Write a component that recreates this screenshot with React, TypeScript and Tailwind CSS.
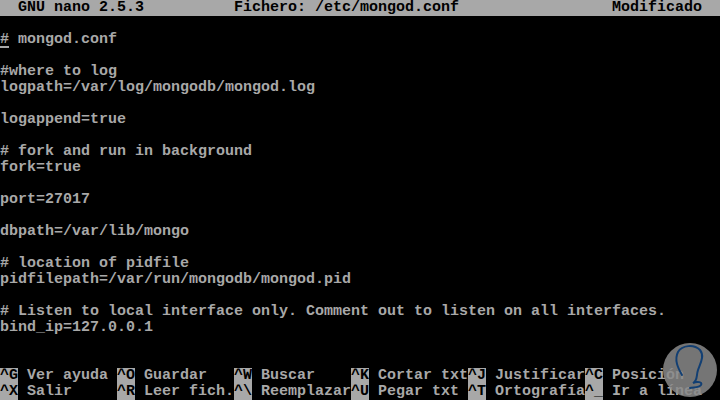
const lines: string[] = [
  "",
  "# mongod.conf",
  "",
  "#where to log",
  "logpath=/var/log/mongodb/mongod.log",
  "",
  "logappend=true",
  "",
  "# fork and run in background",
  "fork=true",
  "",
  "port=27017",
  "",
  "dbpath=/var/lib/mongo",
  "",
  "# location of pidfile",
  "pidfilepath=/var/run/mongodb/mongod.pid",
  "",
  "# Listen to local interface only. Comment out to listen on all interfaces.",
  "bind_ip=127.0.0.1",
  "",
  "",
];

const shortcuts: [string, string][][] = [
  [
    ["^G", " Ver ayuda"],
    ["^O", " Guardar"],
    ["^W", " Buscar"],
    ["^K", " Cortar txt"],
    ["^J", " Justificar"],
    ["^C", " Posición"],
  ],
  [
    ["^X", " Salir"],
    ["^R", " Leer fich."],
    ["^\\", " Reemplazar"],
    ["^U", " Pegar txt"],
    ["^T", " Ortografía"],
    ["^_", " Ir a línea"],
  ],
];

function Watermark() {
  return (
    <svg
      className="absolute left-[660px] top-[340px]"
      width="60"
      height="60"
      viewBox="660 340 60 60"
    >
      <circle cx="690" cy="370" r="27" fill="#8a8a8a" fillOpacity="0.85" />
      <path
        d="M682 375 C 678 368, 674 360, 678 352 C 682 345, 694 344, 700 350 C 705 356, 700 364, 698 370 C 696 376, 698 380, 693 383 C 697 381, 703 382, 701 385 C 699 388, 693 387, 690 388"
        fill="none"
        stroke="#123f73"
        strokeWidth="2"
        strokeLinecap="round"
      />
    </svg>
  );
}

export default function App() {
  return (
    <div className="relative w-[720px] h-[400px] overflow-hidden bg-black text-[#a8a8a8] font-['Liberation_Mono',monospace] text-[15px] leading-4 font-bold">
      <div className="flex h-4 bg-[#a8a8a8] text-black whitespace-pre">
        <span className="w-[234px]">{"  GNU nano 2.5.3"}</span>
        <span className="w-[378px]">Fichero: /etc/mongod.conf</span>
        <span>Modificado</span>
      </div>
      {lines.map((line, i) =>
        i === 1 ? (
          <div key={i} className="h-4 whitespace-pre">
            <span className="relative">
              #
              <span className="absolute left-0 bottom-0 h-[2px] w-[9px] bg-[#a8a8a8]" />
            </span>
            {line.slice(1)}
          </div>
        ) : (
          <div key={i} className="h-4 whitespace-pre">
            {line}
          </div>
        )
      )}
      {shortcuts.map((row, r) => (
        <div key={r} className="flex h-4 whitespace-pre">
          {row.map(([key, label]) => (
            <div key={key} className="w-[117px] flex">
              <span className="bg-[#a8a8a8] text-black">{key}</span>
              <span>{label}</span>
            </div>
          ))}
        </div>
      ))}
      <Watermark />
    </div>
  );
}
